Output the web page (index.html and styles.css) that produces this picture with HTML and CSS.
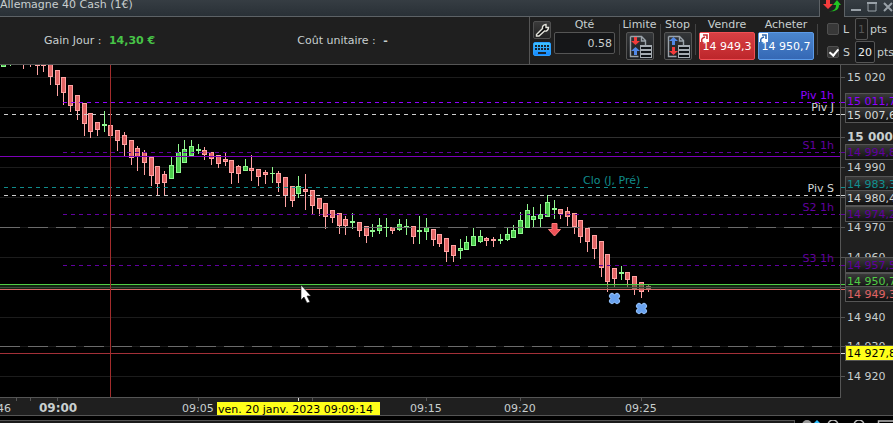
FILE: index.html
```
<!DOCTYPE html>
<html lang="fr">
<head>
<meta charset="utf-8">
<title>Allemagne 40 Cash (1€)</title>
<link rel="stylesheet" href="styles.css">
</head>
<body>
<header class="titlebar">
  <h1 class="title">Allemagne 40 Cash (1€)</h1>
  <div class="link-notch">
    <svg width="20" height="12" viewBox="0 0 20 12" aria-hidden="true">
      <path d="M3 0h4v4h3L5 9 0 4h3z" fill="#f23c3c"/>
      <path d="M6 11c5 0 7-2 7-6h-3l4-5 4 5h-2c0 5-4 7-10 6z" fill="#22c522"/>
    </svg>
  </div>
  <div class="window-controls">
    <button aria-label="Réduire"><svg width="12" height="12"><path d="M1 8h10" stroke="#99a1a8" stroke-width="2"/></svg></button>
    <button aria-label="Agrandir"><svg width="12" height="12"><path d="M2 1h8v8H2z" fill="none" stroke="#99a1a8"/><path d="M1 1h10" stroke="#99a1a8" stroke-width="2"/></svg></button>
    <button aria-label="Fermer"><svg width="12" height="12"><path d="M2 1l8 8M10 1l-8 8" stroke="#99a1a8" stroke-width="2"/></svg></button>
  </div>
</header>

<section class="toolbar">
  <div class="summary">
    <p class="gain">Gain Jour : <strong>14,30 €</strong></p>
    <p class="cost">Coût unitaire : <b>-</b></p>
  </div>
  <div class="order">
    <div class="tools">
      <button class="tool" aria-label="Réglages"><svg width="16" height="16"><path d="M2.500 12.500l6-6c-.5-2 1-4 3.500-4v3h2.500c0 2.500-2 4-4 3.500l-5.500 5h-2.500z" fill="#0c0c0c" stroke="#e4e4dc" stroke-width="1.400"/></svg></button>
      <button class="keyboard" aria-label="Clavier"><svg width="16" height="12" shape-rendering="crispEdges"><path d="M1 3h14M1 6h14" stroke="#182530" stroke-width="2" stroke-dasharray="2 1"/><path d="M4 10h8" stroke="#182530" stroke-width="2"/></svg></button>
    </div>
    <div class="field">
      <label for="qty">Qté</label>
      <input id="qty" class="qty" value="0.58">
    </div>
    <div class="field sep limit">
      <span>Limite</span>
      <button class="square" aria-label="Limite"><svg width="24" height="24"><path d="M2.500 2.500h11l4 4v5M2.500 2.500v20h8M13.500 3v4h4" fill="none" stroke="#9ba3aa" stroke-width="1.400"/><path d="M6 3h3v4h3L7.500 11 3 7h3z" fill="#f23b3b"/><path d="M6 21h3v-4h3l-4.500-4L3 17h3z" fill="#5288e6"/><path d="M12 11h12v13H12z" fill="#a5abb1"/><path d="M13 14h10M13 18h10M13 22h10" stroke="#0e1115" stroke-width="2"/></svg></button>
    </div>
    <div class="field sep stop">
      <span>Stop</span>
      <button class="square" aria-label="Stop"><svg width="24" height="24"><path d="M2.500 2.500h11l4 4v5M2.500 2.500v20h8M13.500 3v4h4" fill="none" stroke="#9ba3aa" stroke-width="1.400"/><path d="M6 11h3V7h3L7.500 3 3 7h3z" fill="#5288e6"/><path d="M6 13h3v4h3l-4.500 4L3 17h3z" fill="#f23b3b"/><path d="M12 11h12v13H12z" fill="#a5abb1"/><path d="M13 14h10M13 18h10M13 22h10" stroke="#0e1115" stroke-width="2"/></svg></button>
    </div>
    <div class="field sep sell">
      <span>Vendre</span>
      <button class="deal red"><svg class="corner" width="10" height="10"><path d="M0 0h9v9H0z" fill="#fff"/><path d="M2 9c-1-3 0-4 3-5M3 2h4v4" fill="none" stroke="#c92d32" stroke-width="1.600"/></svg>14 949,3</button>
    </div>
    <div class="field buy">
      <span>Acheter</span>
      <button class="deal blue"><svg class="corner" width="10" height="10"><path d="M0 0h9v9H0z" fill="#fff"/><path d="M2 9c-1-3 0-4 3-5M3 2h4v4" fill="none" stroke="#2f68b0" stroke-width="1.600"/></svg>14 950,7</button>
    </div>
    <div class="limits sep">
      <div class="limit-row off">
        <input type="checkbox" id="l"><label for="l">L</label>
        <input class="pts one" aria-label="Points L" value="1" disabled><span>pts</span>
      </div>
      <div class="limit-row">
        <input type="checkbox" id="s" checked><label for="s">S</label>
        <input class="pts two" aria-label="Points S" value="20"><span>pts</span>
      </div>
    </div>
  </div>
</section>

<main class="market">
  <div class="plot">
    <svg class="canvas" role="img" aria-label="Cours">
      <g id="chart" transform="translate(0,-65)"></g>
    </svg>
  </div>
  <div class="prices">
    <svg class="canvas" role="img" aria-label="Prix">
      <defs><linearGradient id="tag" x1="0" y1="0" x2="0" y2="1"><stop offset="0" stop-color="#3b3b3b"/><stop offset="1" stop-color="#101010"/></linearGradient></defs>
      <g id="axis" transform="translate(0,-65)"></g>
    </svg>
  </div>
</main>
<div class="times">
  <svg class="canvas" role="img" aria-label="Heures"><g id="times"></g></svg>
</div>
<footer class="bottom">
  <div class="panel"></div>
  <svg width="92" height="3" aria-hidden="true"><g fill="none" stroke="#bbb" stroke-width="1.500"><circle cx="32" cy="5" r="5"/><circle cx="58" cy="5" r="5"/><path d="M77.500 5V1h16"/></g><circle cx="6" cy="5" r="5" fill="#999"/><path d="M13 3l3-3 3 3z" fill="#2fc0ff"/></svg>
</footer>
<script src="chart.js"></script>
</body>
</html>
```
FILE: styles.css
```
* { box-sizing: border-box; }
body {
  margin: 0;
  height: 100vh;
  display: flex;
  flex-direction: column;
  overflow: hidden;
  background: #000;
  color: #c8cfcf;
  font: 11px/13px "DejaVu Sans", sans-serif;
}
h1, p { margin: 0; font-size: inherit; font-weight: normal; }
button, input { font: inherit; color: inherit; margin: 0; padding: 0; }
svg { display: block; }

.titlebar { display: flex; height: 17px; flex: none; background: #1f1f1f; }
.title {
  flex: 1;
  border: solid #5d6266;
  border-width: 0 1px 1px 0;
  background: linear-gradient(#363d43, #293036);
  line-height: 9px;
  font-size: 11px;
  white-space: nowrap;
}
.link-notch { width: 24px; padding-left: 3px; }
.window-controls {
  display: flex;
  width: 49px;
  gap: 4px;
  padding-left: 5px;
  border: solid #5d6266;
  border-width: 0 0 1px 1px;
  background: linear-gradient(#363d43, #293036);
}
.window-controls button { flex: none; width: 12px; border: 0; background: none; }

.toolbar {
  display: flex;
  flex: none;
  height: 48px;
  background: #1f1f1f;
  border-bottom: 1px solid #555;
}
.summary { display: flex; flex: 1; align-items: center; gap: 142px; padding-left: 44px; white-space: nowrap; }
.gain strong { color: #47c447; margin-left: 4px; }
.cost b { margin-left: 4px; }
.order { display: flex; width: 364px; border-left: 1px solid #555; padding-left: 3px; }
.tools { display: flex; flex-direction: column; gap: 3px; width: 18px; padding-top: 4px; margin-right: 3px; }
.tools button { width: 18px; border: 1px solid #505050; border-radius: 2px; }
.tool { height: 18px; background: linear-gradient(#3a3a3a, #222); }
.tools .keyboard { height: 14px; border-color: #299fff; background: linear-gradient(#40c4ff, #1688ff); }
.field { position: relative; display: flex; flex: none; flex-direction: column; gap: 1px; align-items: center; padding-top: 1px; white-space: nowrap; }
.qty { width: 61px; height: 22px; padding-right: 2px; text-align: right; }
.field > label, .field > span { line-height: 13px; }
.qty, .pts { background: #151618; border: 1px solid #555; border-radius: 2px; }
.sep::before { content: ""; position: absolute; left: 0; top: 7px; height: 31px; border-left: 1px solid #444; }
.limit { width: 41px; margin-left: 4px; }
.stop { width: 35px; }
.sell { width: 63px; padding-left: 4px; padding-right: 3px; }
.buy { width: 56px; }
.square { width: 28px; height: 28px; padding: 1px; border: 1px solid #555; border-radius: 2px; background: linear-gradient(#343638, #1b1d20); }
.deal { position: relative; z-index: 0; width: 56px; height: 28px; border-radius: 2px; color: #fff; white-space: nowrap; }
.red { background: linear-gradient(#d84044, #bd262b); border: 1px solid #f05055; }
.blue { background: linear-gradient(#4b86ce, #3568b5); border: 1px solid #5c9be8; }
.corner { position: absolute; left: 0; top: 0; z-index: -1; }
.limits { position: relative; display: flex; flex-direction: column; gap: 1px; width: 79px; padding: 1px 0 0 10px; margin-left: 3px; }
.limit-row { display: flex; align-items: center; height: 22px; white-space: nowrap; }
.limit-row label { width: 12px; margin-left: 4px; }
.limit-row span { margin-left: 2px; }
.pts { height: 22px; text-align: center; }
.one { width: 13px; color: #555; background: #1c1c1c; }
.two { width: 20px; color: #eee; }
.limit-row input[type="checkbox"] {
  appearance: none;
  flex: none;
  width: 12px;
  height: 12px;
  border: 1px solid #505050;
  border-radius: 2px;
  background: #383838;
}
.limit-row input[type="checkbox"]:checked::before {
  content: "";
  display: block;
  width: 4px;
  height: 7px;
  margin: 0 3px;
  border: solid #fff;
  border-width: 0 2px 2px 0;
  transform: rotate(40deg);
}

.market { display: flex; flex: 1; min-height: 0; }
.plot { flex: 1; border: solid #555; border-width: 0 1px 1px 0; background: #000; }
.prices { width: 52px; background: #1f1f1f; }
.canvas { width: 100%; height: 100%; }
.times { flex: none; height: 18px; background: #1f1f1f; border-bottom: 1px solid #555; }
.bottom { display: flex; flex: none; height: 7px; padding-top: 4px; background: #000; }
.panel { flex: 1; margin-right: 6px; border: solid #555; border-width: 1px 1px 0 0; background: #1c1c1c; }
text { fill: #c8cfcf; }
text.big { font-size: 12px; font-weight: bold; }
```
FILE: chart.js
```
const NS = "http://www.w3.org/2000/svg";
const chart = document.getElementById("chart");
const axis = document.getElementById("axis");
const times = document.getElementById("times");

function add(parent, name, attrs, text) {
  const el = document.createElementNS(NS, name);
  for (const key in attrs) el.setAttribute(key, attrs[key]);
  if (text) el.textContent = text;
  parent.appendChild(el);
  return el;
}
function hline(parent, y, color, x1 = 0, x2 = "100%", dash = "") {
  add(parent, "line", { x1, x2, y1: y + 0.5, y2: y + 0.5, stroke: color, "stroke-dasharray": dash, "shape-rendering": "crispEdges" });
}
function box(parent, x, y, width, height, fill) {
  add(parent, "rect", { x, y, width, height, fill, "shape-rendering": "crispEdges" });
}

// Price grid
[77, 107, 137, 167, 197, 227, 257, 287, 317, 346, 376].forEach(y => {
  hline(chart, y, y === 137 ? "#303030" : "#1c1c1c");
  hline(axis, y, "#555", 0, 4);
});

// [x, high, body top, body bottom, low, rising]
const candles = [
  [3,60,60,67,67,1],[10,60,60,62,66,1],[23,60,60,62,69],[30,60,60,62,67],[37,60,60,66,75],[43,60,60,66,72],
  [50,60,60,77,85],[57,70,70,85,96],[63,77,77,93,105],[70,85,85,106,112],[77,95,95,111,120],[84,103,103,124,136],
  [90,113,113,132,138],[97,122,122,130,136],[104,111,124,126,132,1],[110,122,125,136,145],[117,130,130,141,151],
  [124,132,135,145,156],[131,140,140,158,165],[137,146,148,157,171],[144,150,152,163,175],[151,157,157,176,186],
  [157,166,166,184,195],[164,171,174,183,195],[171,157,165,179,179,1],[178,144,152,173,173,1],[184,140,149,163,163,1],
  [191,140,146,156,156,1],[198,144,149,151,154,1],[204,147,150,155,160],[211,152,152,159,165],[218,155,155,164,168],
  [225,153,159,162,166],[231,160,160,173,184],[238,165,166,174,183],[245,159,166,171,171,1],[251,155,168,171,181],
  [258,169,169,177,186],[265,170,172,175,184],[272,167,173,174,183,1],[278,171,173,183,192],[285,177,177,196,207],
  [292,186,186,201,207],[298,176,186,194,198,1],[305,174,189,192,210],[312,190,190,206,214],[319,198,198,209,216],
  [325,203,203,217,229],[332,210,210,218,223],[339,213,213,226,234],[345,216,219,226,235],[352,213,221,223,229,1],
  [359,222,222,231,237],[366,226,226,236,243],[372,224,230,232,237,1],[379,218,225,231,234,1],[386,218,227,228,237,1],
  [392,227,227,231,234],[399,219,224,230,231,1],[406,219,226,228,235,1],[413,226,226,237,244],[419,216,230,232,244,1],
  [426,218,227,232,240,1],[433,229,229,240,246],[439,234,234,244,247],[446,238,238,252,262],[453,245,245,256,262],
  [460,239,248,251,259,1],[466,236,242,250,250,1],[473,228,236,246,246,1],[480,230,236,242,243,1],[486,237,238,241,246],
  [493,237,239,241,247],[500,234,239,241,244,1],[507,227,234,240,241,1],[513,225,230,238,238,1],[520,212,220,234,234,1],
  [527,204,210,228,228,1],[533,207,216,220,227,1],[540,204,214,219,228,1],[547,195,202,217,217,1],[554,200,208,210,219,1],
  [560,209,209,214,219],[567,207,211,217,226],[574,213,213,227,234],[580,220,220,237,243],[587,228,228,242,252],
  [594,235,235,249,259],[601,241,241,268,277],[607,254,254,282,292],[614,268,268,279,288],[621,266,272,274,280,1],
  [627,272,272,280,288],[634,276,276,289,295],[641,282,282,292,298],[648,285,286,289,292]
];
candles.forEach(([x, high, top, bottom, low, up]) => {
  const edge = up ? "#90f890" : "#ffa3a3";
  box(chart, x, high, 1, low - high, edge);
  box(chart, x - 2, top, 5, bottom - top, edge);
  if (bottom - top > 2) box(chart, x - 1, top + 1, 3, bottom - top - 2, up ? "#4bca4b" : "#e06464");
});

// Levels
hline(chart, 102, "#8f00ff", 63, "100%", "4 4");
hline(chart, 114, "#cfcfcf", 4, "100%", "4 4");
hline(chart, 152, "#61009f", 63, "100%", "4 4");
hline(chart, 156, "#7c00b8");
hline(chart, 187, "#108c8c", 4, 648, "4 4");
hline(chart, 195, "#cfcfcf", 4, "100%", "4 4");
hline(chart, 214, "#61009f", 63, "100%", "4 4");
hline(chart, 265, "#61009f", 63, "100%", "4 4");
hline(chart, 227, "#6b6b6b", 0, "100%", "20 8");
hline(chart, 346, "#6b6b6b", 0, "100%", "20 8");
add(chart, "rect", { x: 0, y: 285, width: "100%", height: 4, fill: "#234a23", "fill-opacity": 0.5 });
hline(chart, 287, "#3a4a3a");
hline(chart, 284, "#50cd45");
hline(chart, 289, "#d96868");
hline(chart, 353, "#a33038");
box(chart, 110, 65, 1, 333, "#a32c2c");

[[99, "Piv 1h", "#8f00ff"], [111, "Piv J", "#d4d9d9"], [149, "S1 1h", "#61009f"],
 [192, "Piv S", "#d4d9d9"], [211, "S2 1h", "#61009f"], [262, "S3 1h", "#61009f"]]
  .forEach(([y, label, color]) => add(chart, "text", { x: "100%", dx: -6, y, "text-anchor": "end", style: "fill:" + color }, label));
add(chart, "text", { x: 583, y: 184, style: "fill:#108c8c" }, "Clo (J, Pré)");

// Trade markers
add(chart, "path", { d: "M552 223.500h5v6h3.500l-6 6.500-6-6.500h3.500z", fill: "#ee5258", stroke: "#ff7a7a" });
[[614, 298], [641, 308]].forEach(([x, y]) => {
  const d = `M${x - 2} ${y - 2}l5 5m0 -5l-5 5`;
  add(chart, "path", { d, stroke: "#90bdf5", "stroke-width": 6, "stroke-linecap": "round" });
  add(chart, "path", { d, stroke: "#69a2ef", "stroke-width": 4, "stroke-linecap": "round" });
});
add(chart, "path", { d: "M301 285v15l3-3 3 6 3-1-3-6h4z", fill: "#fff", stroke: "#111", "stroke-width": 0.6 });

// Price axis
[[77, "15 020"], [137, "15 000"], [167, "14 990"], [227, "14 970"], [257, "14 960"], [317, "14 940"], [346, "14 930"], [376, "14 920"]]
  .forEach(([y, label]) => add(axis, "text", { x: 6, y: y + 4, class: y === 137 ? "big" : "" }, label));
[[93, 102, "15 011,7", "#8f00ff"], [107, 114, "15 007,6", "#d4d9d9"], [144, 152, "14 994,8", "#61009f"],
 [176, 187, "14 983,3", "#109090"], [190, 195, "14 980,4", "#d4d9d9"], [206, 214, "14 974,2", "#61009f"],
 [257, 265, "14 957,5", "#61009f"], [273, 284, "14 950,7", "#50cd45"], [286, 289, "14 949,3", "#e06464"],
 [345, 353, "14 927,8", "#000"]].forEach(([y, at, label, color]) => {
  const yellow = color === "#000";
  hline(axis, at, yellow ? "#ddd" : color, 0, 4);
  add(axis, "rect", { x: 4.5, y: y + 0.5, width: 60, height: 15, fill: yellow ? "#ffff1a" : "url(#tag)", stroke: "#555" });
  add(axis, "text", { x: 6, y: y + 12, style: "fill:" + color }, label);
});

// Time axis
[16, 30, 57, 198, 298, 312, 426, 520, 641].forEach(x => box(times, x, 0, 1, 3, x === 298 ? "#ddd" : "#555"));
[[-3, "46"], [39, "09:00"], [182, "09:05"], [410, "09:15"], [504, "09:20"], [625, "09:25"]]
  .forEach(([x, label]) => add(times, "text", { x, y: 14, class: x === 39 ? "big" : "" }, label));
box(times, 217, 4, 163, 13, "#ffff1a");
add(times, "text", { x: 218, y: 15, style: "fill:#000" }, "ven. 20 janv. 2023 09:09:14");
```
